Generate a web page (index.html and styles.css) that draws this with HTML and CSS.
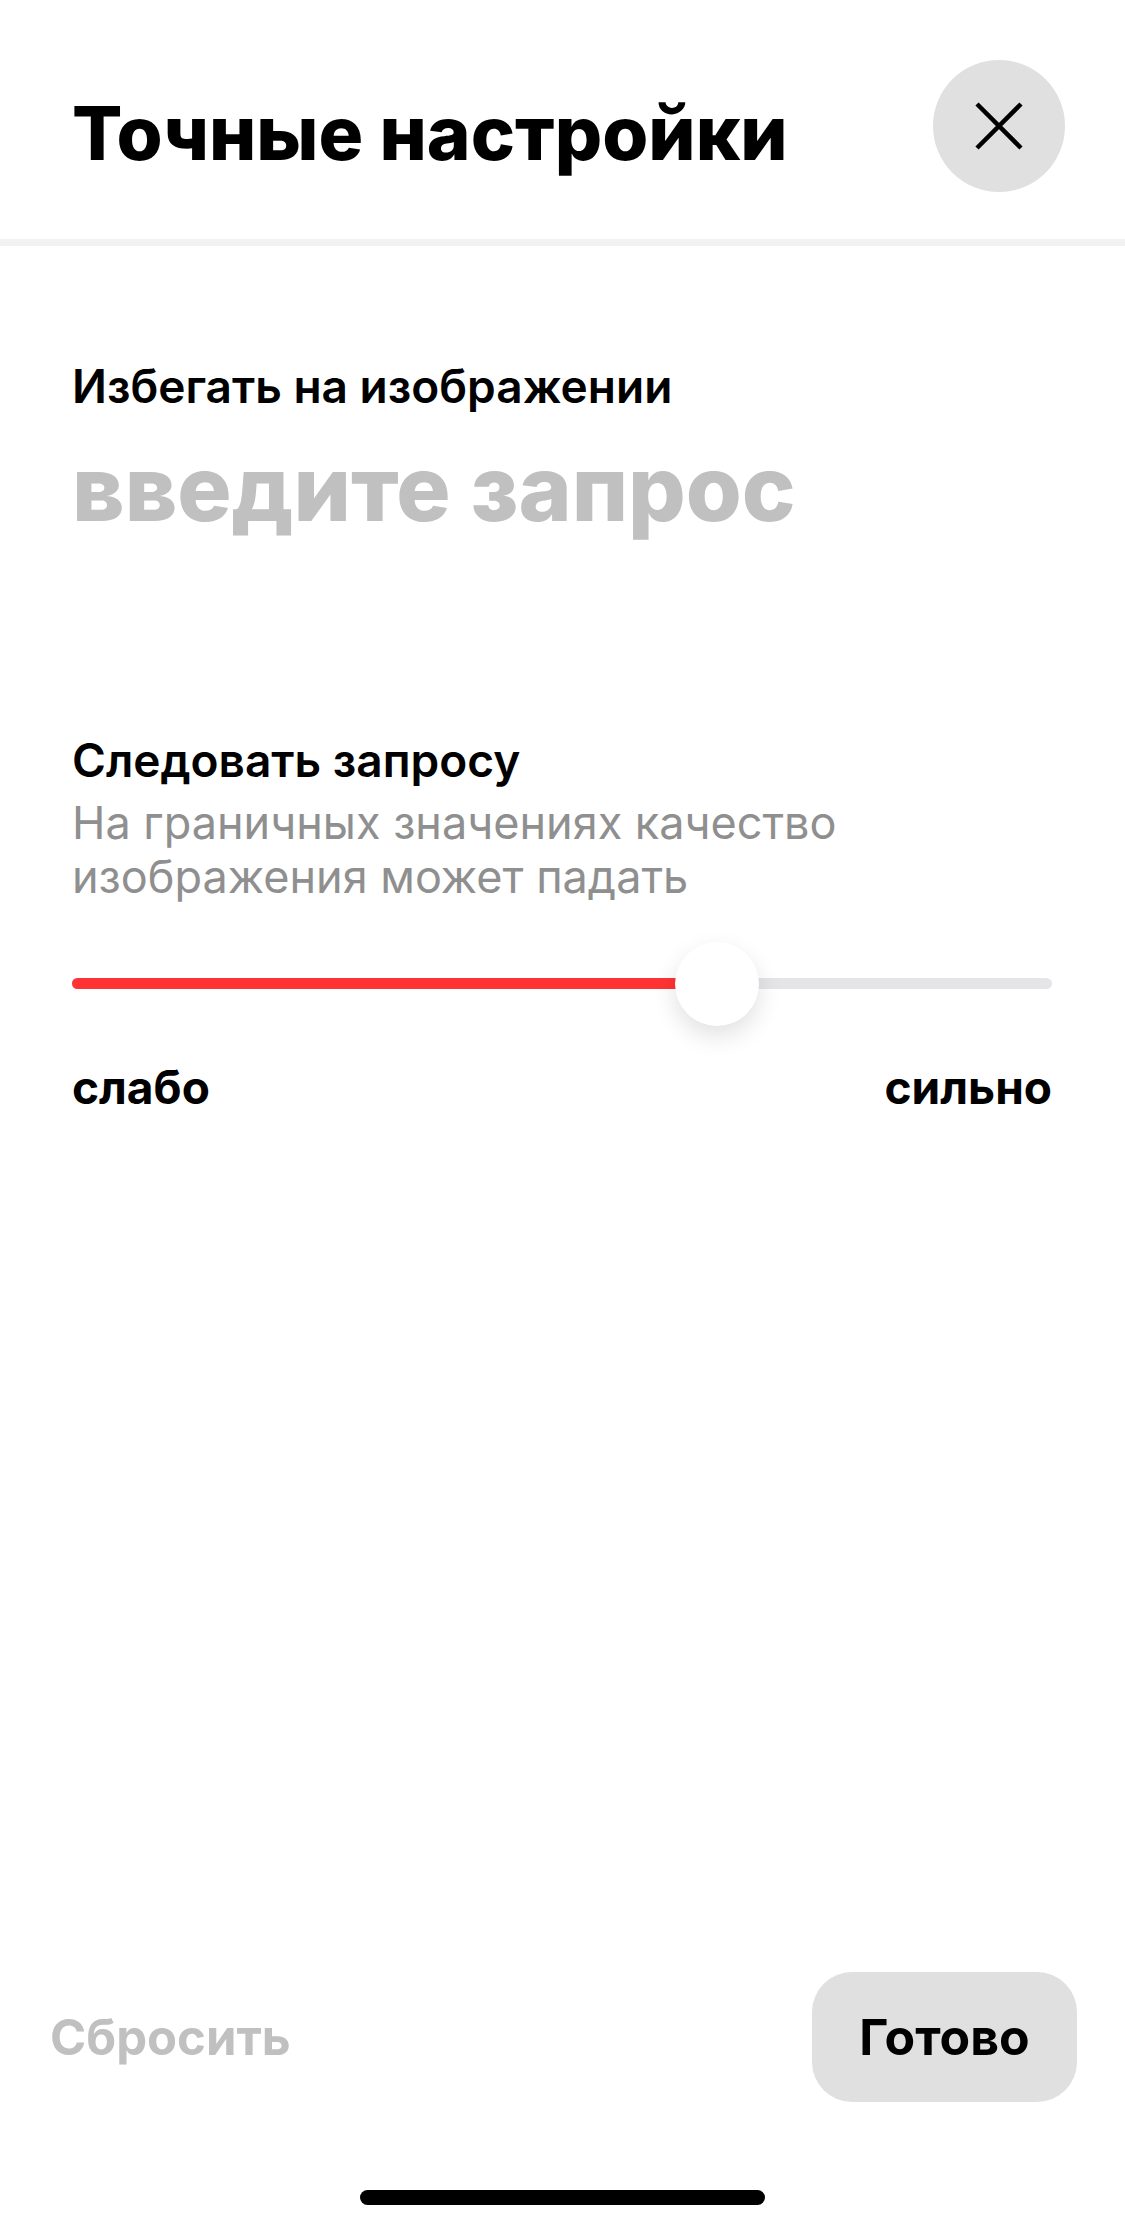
FILE: index.html
```html
<!DOCTYPE html>
<html lang="ru">
<head>
  <meta charset="UTF-8" />
  <meta name="viewport" content="width=device-width, initial-scale=1.0" />
  <title>Точные настройки</title>
  <link rel="stylesheet" href="styles.css">
</head>
<body>
  <div class="sheet">
    <div class="header">
      <h1 class="title">Точные настройки</h1>
      <button class="close" aria-label="Закрыть">
        <svg width="48" height="48" viewBox="0 0 48 48">
          <path d="M2 2 L46 46 M46 2 L2 46" stroke="#000" stroke-width="4.5" fill="none" />
        </svg>
      </button>
    </div>
    <div class="divider"></div>

    <div class="section avoid">
      <div class="label">Избегать на изображении</div>
      <div class="placeholder">введите запрос</div>
    </div>

    <div class="section follow">
      <div class="label">Следовать запросу</div>
      <div class="hint">На граничных значениях качество<br>изображения может падать</div>

      <div class="slider">
        <div class="track">
          <div class="fill" style="width: 65.8%"></div>
          <div class="thumb" style="left: 65.8%"></div>
        </div>
      </div>

      <div class="range-labels">
        <span>слабо</span>
        <span>сильно</span>
      </div>
    </div>

    <div class="spacer"></div>

    <div class="footer">
      <button class="reset">Сбросить</button>
      <button class="done">Готово</button>
    </div>
    <div class="home-bar"></div>
  </div>
</body>
</html>
```

FILE: styles.css
```css
* {
  box-sizing: border-box;
}

html, body {
  margin: 0;
  padding: 0;
  background: #fff;
}

body {
  font-family: Inter, "Noto Sans", Arial, sans-serif;
  color: #000;
}

.sheet {
  display: flex;
  flex-direction: column;
  min-height: 100vh;
}

.header {
  height: 239px;
  padding: 60px 60px 0 72px;
  display: flex;
  justify-content: space-between;
  align-items: flex-start;
}

.title {
  margin: 36px 0 0 0;
  font-size: 74.5px;
  line-height: 1;
  font-weight: 800;
}

.close {
  width: 132px;
  height: 132px;
  border-radius: 50%;
  border: none;
  background: #e0e0e0;
  display: flex;
  align-items: center;
  justify-content: center;
  padding: 0;
}

.divider {
  height: 7px;
  background: #f2f2f2;
}

.section {
  padding: 0 73px 0 72px;
}

.label {
  font-size: 46px;
  line-height: 1;
  font-weight: 600;
}

.avoid {
  margin-top: 117px;
}

.placeholder {
  margin-top: 34px;
  font-size: 90.5px;
  line-height: 1;
  font-weight: 800;
  color: #c0c0c0;
}

.follow {
  margin-top: 203px;
}

.hint {
  margin-top: 13px;
  font-size: 45px;
  line-height: 54px;
  color: #8f8f8f;
}

.slider {
  margin-top: 38px;
  height: 84px;
  display: flex;
  align-items: center;
}

.track {
  position: relative;
  width: 100%;
  height: 11px;
  border-radius: 6px;
  background: #e5e5e8;
}

.fill {
  height: 100%;
  border-radius: 6px 0 0 6px;
  background: #ff3333;
}

.thumb {
  position: absolute;
  top: 50%;
  width: 84px;
  height: 84px;
  margin: -42px 0 0 -42px;
  border-radius: 50%;
  background: #fff;
  box-shadow: 0 10px 24px rgba(0, 0, 0, 0.12);
}

.range-labels {
  margin-top: 38px;
  display: flex;
  justify-content: space-between;
  font-size: 46px;
  line-height: 1;
  font-weight: 700;
}

.spacer {
  flex: 1;
}

.footer {
  display: flex;
  justify-content: space-between;
  align-items: center;
  padding: 0 48px 0 50px;
}

.footer button {
  font-family: inherit;
  font-weight: 700;
  border: none;
  padding: 0;
}

.reset {
  font-size: 49px;
  background: none;
  color: #c0c0c0;
}

.done {
  width: 265px;
  height: 130px;
  font-size: 50px;
  border-radius: 40px;
  background: #e0e0e0;
  color: #000;
}

.home-bar {
  width: 405px;
  height: 15px;
  margin: 88px auto 24px;
  border-radius: 8px;
  background: #000;
}
```
